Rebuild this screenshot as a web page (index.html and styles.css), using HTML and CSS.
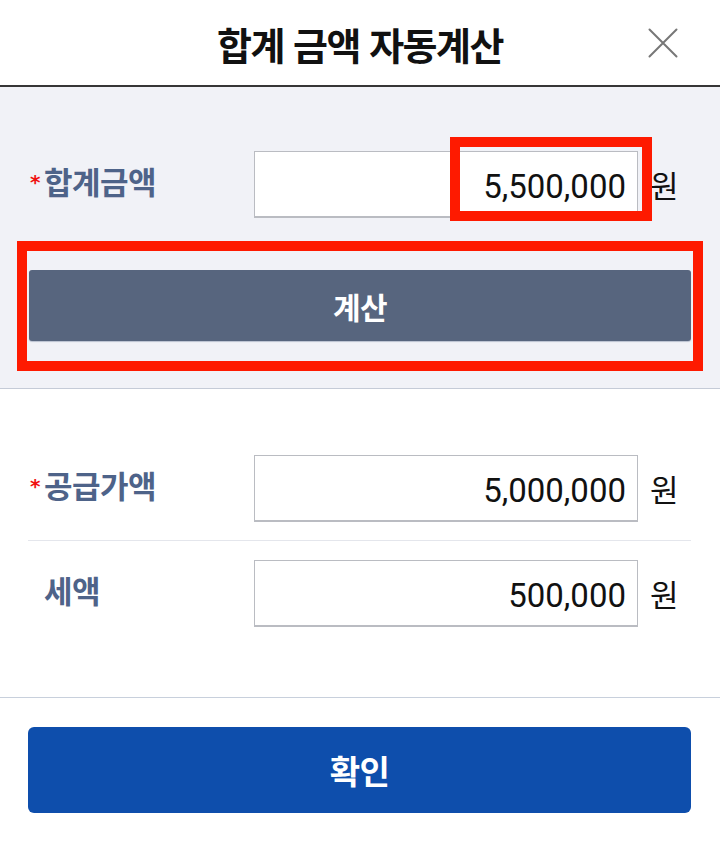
FILE: index.html
```html
<!DOCTYPE html>
<html lang="ko">
<head>
<meta charset="utf-8">
<title>합계 금액 자동계산</title>
<link rel="stylesheet" href="styles.css">
</head>
<body>
<div class="modal">
  <header class="modal-header">
    <h1 class="modal-title">합계 금액 자동계산</h1>
    <button class="close-btn" type="button" aria-label="닫기">
      <svg width="30" height="30" viewBox="0 0 30 30"><path d="M1.5 1.5 L28.5 28.5 M28.5 1.5 L1.5 28.5" stroke="#777" stroke-width="2" fill="none" stroke-linecap="round"/></svg>
    </button>
  </header>

  <section class="calc-section">
    <div class="field-row">
      <label class="field-label"><span class="req">*</span>합계금액</label>
      <div class="field-input">5,500,000</div>
      <span class="unit">원</span>
    </div>
    <button class="calc-btn" type="button">계산</button>
  </section>

  <section class="amount-section">
    <div class="field-row divided">
      <label class="field-label"><span class="req">*</span>공급가액</label>
      <div class="field-input">5,000,000</div>
      <span class="unit">원</span>
    </div>
    <div class="field-row">
      <label class="field-label"><span class="req hidden">*</span>세액</label>
      <div class="field-input">500,000</div>
      <span class="unit">원</span>
    </div>
  </section>

  <footer class="modal-footer">
    <button class="confirm-btn" type="button">확인</button>
  </footer>

  <div class="mark mark-total"></div>
  <div class="mark mark-calc"></div>
</div>
</body>
</html>
```

FILE: styles.css
```css
* { box-sizing: border-box; }
html, body { margin: 0; padding: 0; background: #fff; }
body {
  font-family: "Noto Sans CJK KR", "Noto Sans", sans-serif;
  color: #111;
}
.modal {
  position: relative;
  width: 720px;
  min-height: 851px;
  background: #fff;
}
.modal-header {
  height: 87px;
  border-bottom: 2px solid #363636;
  display: grid;
  grid-template-columns: 1fr auto 1fr;
  align-items: center;
}
.modal-title {
  grid-column: 2;
  margin: 0;
  font-size: 38px;
  font-weight: 700;
  letter-spacing: -1.5px;
  color: #111;
  line-height: 1;
  padding-top: 2px;
}
.close-btn {
  grid-column: 3;
  justify-self: end;
  margin-right: 42px;
  width: 30px;
  height: 30px;
  padding: 0;
  border: 0;
  background: none;
  display: flex;
}
.calc-section {
  background: #f1f2f7;
  border-bottom: 1px solid #c5cbd7;
  padding: 64px 29px 47px 28px;
}
.field-row {
  display: flex;
  align-items: center;
  padding-left: 2px;
}
.field-label {
  width: 224px;
  display: flex;
  align-items: center;
  font-size: 31px;
  font-weight: 700;
  color: #4e6389;
  letter-spacing: -0.5px;
  line-height: 1;
  padding-bottom: 8px;
}
.req {
  color: #f01010;
  font-size: 20px;
  width: 14px;
  margin-top: 2px;
  font-family: "DejaVu Sans", sans-serif;
}
.req.hidden { visibility: hidden; }
.field-input {
  width: 384px;
  height: 67px;
  background: #fff;
  border: 1px solid #babcc2;
  border-bottom-width: 2px;
  display: flex;
  align-items: center;
  justify-content: flex-end;
  padding: 4px 11px 0 0;
  font-family: "Roboto", "Liberation Sans", sans-serif;
  font-size: 33px;
  color: #111;
}
.unit {
  margin-left: 12px;
  font-size: 31px;
  color: #111;
  line-height: 1;
}
.calc-btn {
  display: block;
  width: 662px;
  margin: 52px 0 0 1px;
  height: 71px;
  border: 0;
  border-radius: 3px;
  background: #57657e;
  box-shadow: 0 1px 1px #b9c0cf;
  color: #fff;
  font-family: "Noto Sans CJK KR", sans-serif;
  font-size: 30px;
  font-weight: 700;
  letter-spacing: -0.5px;
}
.amount-section {
  padding: 66px 29px 70px 28px;
}
.amount-section .field-row.divided {
  padding-bottom: 18px;
  border-bottom: 1px solid #e4e6ec;
  margin-bottom: 19px;
}
.modal-footer {
  border-top: 1px solid #c8d0dc;
  padding: 29px 29px 0 28px;
}
.confirm-btn {
  display: block;
  width: 663px;
  height: 86px;
  border: 0;
  border-radius: 6px;
  background: #0e4eac;
  color: #fff;
  font-family: "Noto Sans CJK KR", sans-serif;
  font-size: 33px;
  font-weight: 700;
  letter-spacing: -0.5px;
}
.mark {
  position: absolute;
  border: 10px solid #fe1a00;
  pointer-events: none;
}
.mark-total {
  left: 450px;
  top: 137px;
  width: 202px;
  height: 84px;
}
.mark-calc {
  left: 17px;
  top: 241px;
  width: 686px;
  height: 130px;
}
```
